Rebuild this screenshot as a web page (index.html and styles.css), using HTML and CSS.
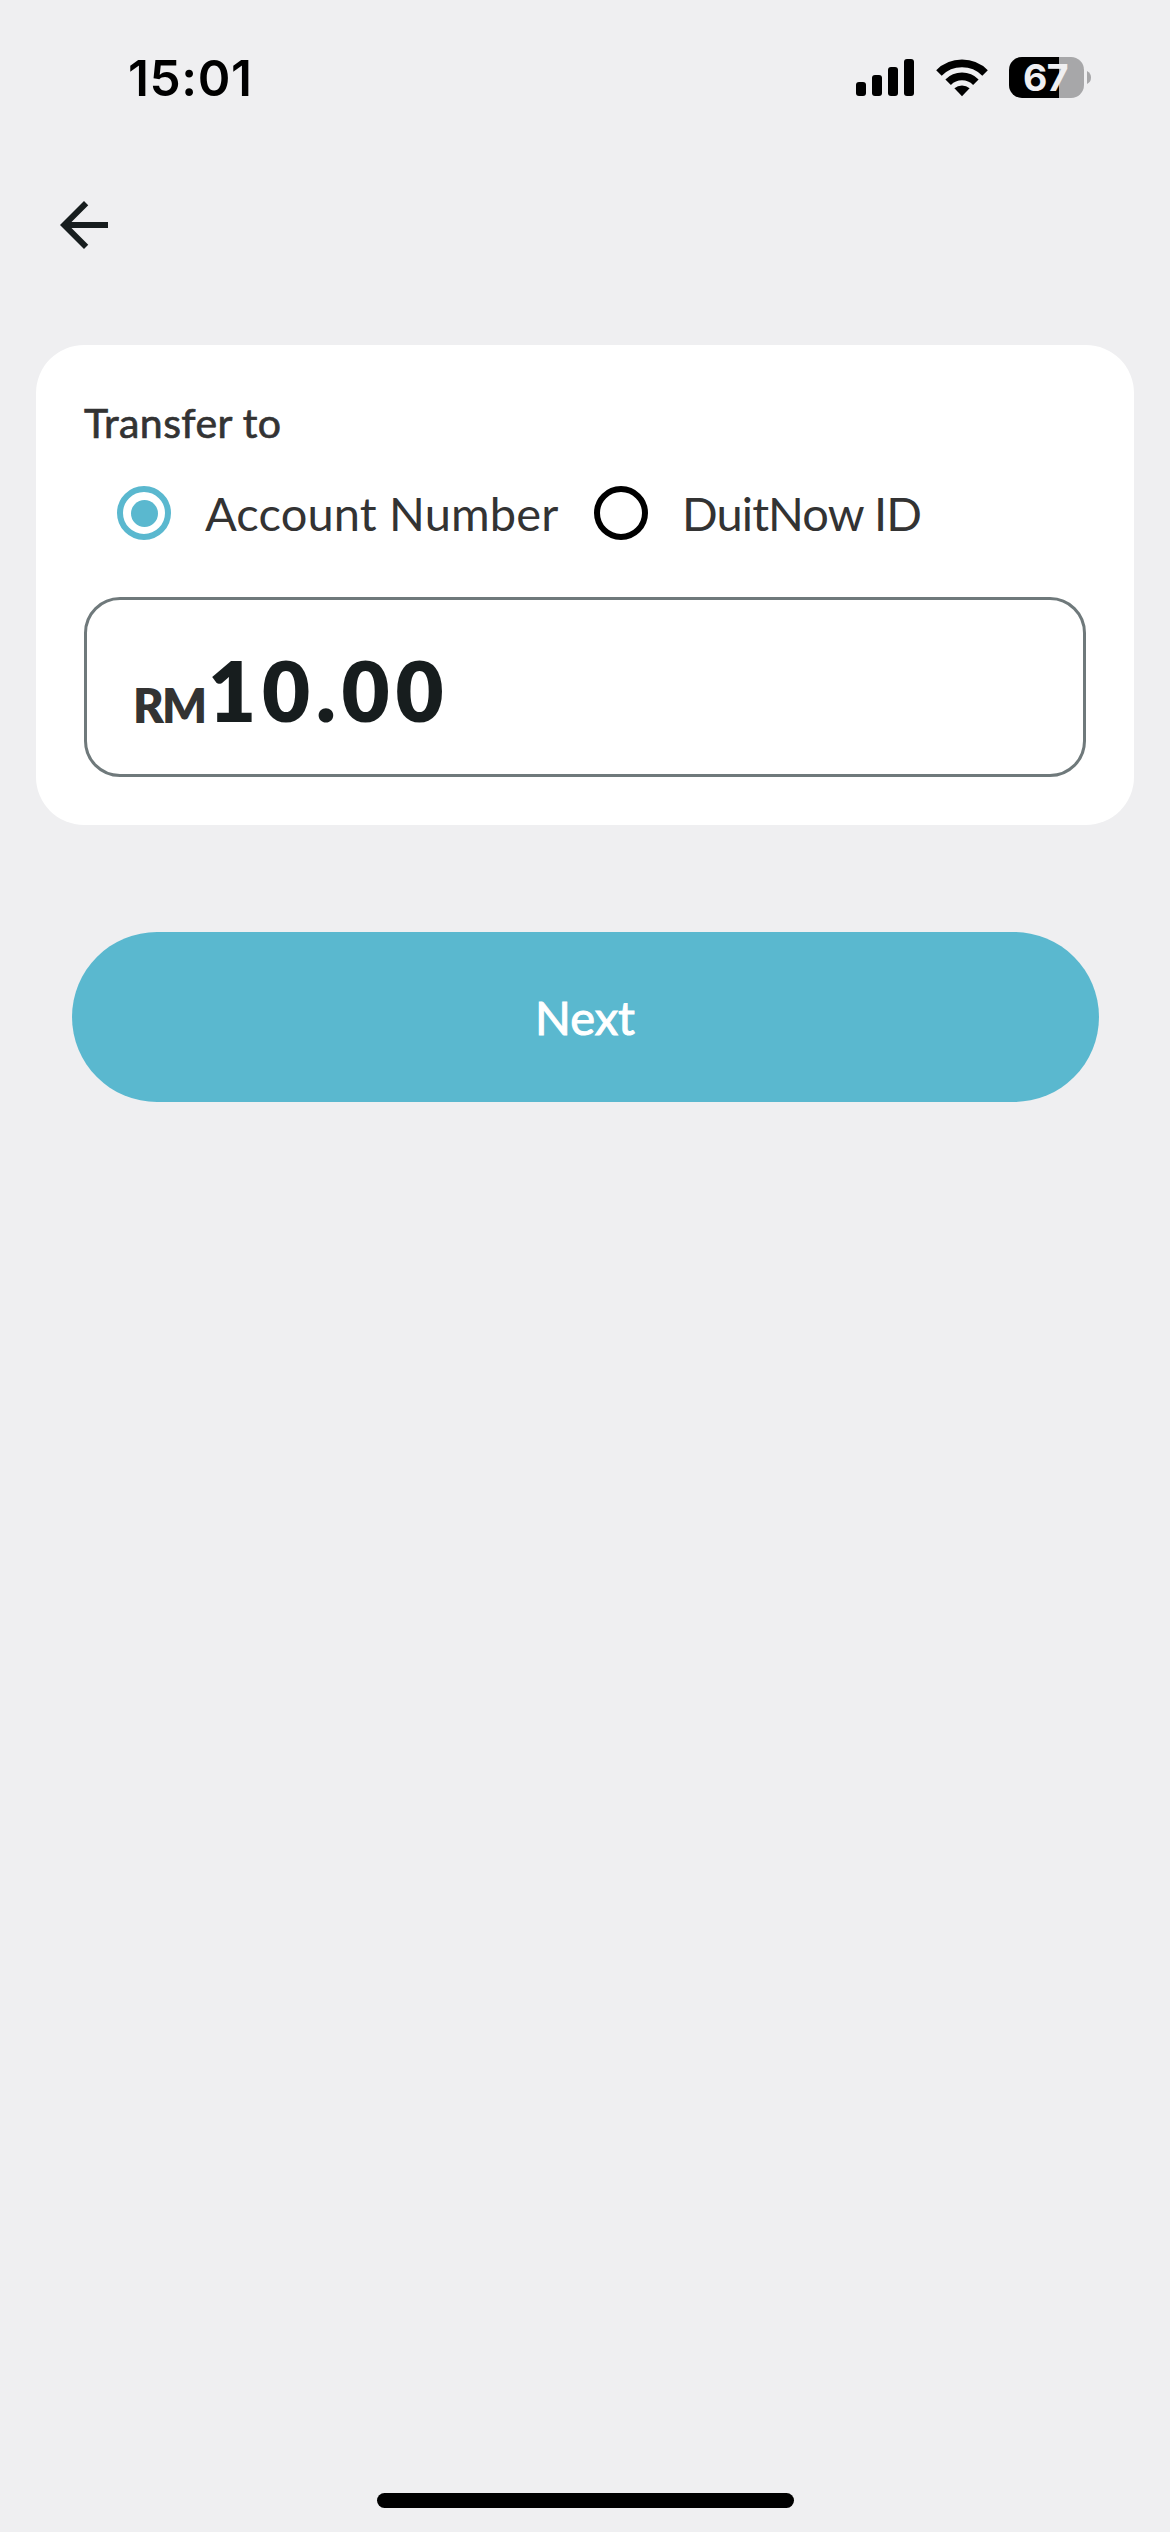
FILE: index.html
```html
<!DOCTYPE html>
<html lang="en">
<head>
<meta charset="utf-8">
<title>Transfer</title>
<link rel="stylesheet" href="styles.css">
</head>
<body>
<div class="screen">
  <header class="status">
    <span class="time">15:01</span>
    <div class="indicators">
      <svg class="signal" width="58" height="37" viewBox="0 0 58 37">
        <rect x="0" y="23" width="10" height="14" rx="3"/>
        <rect x="16" y="16" width="10" height="21" rx="3"/>
        <rect x="32" y="8" width="10" height="29" rx="3"/>
        <rect x="48" y="0" width="10" height="37" rx="3"/>
      </svg>
      <svg class="wifi" width="52" height="38" viewBox="0 0 52 38">
        <path class="arc" d="M2.95 13.95A32.6 32.6 0 0 1 49.05 13.95"/>
        <path class="arc" d="M12.14 23.14A19.6 19.6 0 0 1 39.86 23.14"/>
        <path d="M26 37.2L18.4 29.2A11.8 11.8 0 0 1 33.6 29.2Z"/>
      </svg>
      <div class="battery"><span class="level">67</span></div>
      <svg class="nub" width="4" height="13" viewBox="0 0 4 13"><path d="M0 0Q4 2 4 6.5T0 13Z"/></svg>
    </div>
  </header>
  <nav class="nav">
    <svg width="72" height="72" viewBox="0 0 24 24"><path d="M20 11H7.83l5.59-5.59L12 4l-8 8 8 8 1.41-1.41L7.83 13H20z"/></svg>
  </nav>
  <main class="card">
    <div class="label">Transfer to</div>
    <div class="options">
      <div class="radio selected"></div>
      <span class="option account">Account Number</span>
      <div class="radio"></div>
      <span class="option duitnow">DuitNow ID</span>
    </div>
    <div class="amount">
      <span class="currency">RM</span>
      <span class="value">10.00</span>
    </div>
  </main>
  <button class="next"><span>Next</span></button>
  <div class="home"></div>
</div>
</body>
</html>
```
FILE: styles.css
```css
* { box-sizing: border-box; }
body { margin: 0; background: #efeff1; }
.screen {
  display: flex;
  flex-direction: column;
  width: 1170px;
  height: 2532px;
  font-family: Lato, "Open Sans", sans-serif;
  color: #333;
  white-space: nowrap;
}
svg { display: block; flex: none; }
.status {
  display: flex;
  justify-content: space-between;
  height: 141px;
  padding: 57px 79px 0 128px;
  font-family: Inter, sans-serif;
  color: #000;
}
.time { font-size: 49.5px; line-height: 42px; font-weight: 600; letter-spacing: 0.6px; }
.indicators { display: flex; align-items: flex-start; }
.signal { margin-top: 2px; }
.wifi { margin: 2px 0 0 21.5px; }
.arc { fill: none; stroke: #000; stroke-width: 7.8; }
.battery {
  width: 75px;
  height: 41px;
  margin-left: 21.5px;
  padding-left: 14px;
  border-radius: 13px;
  background: linear-gradient(90deg, #000 50px, #a7a7a9 50px);
}
.level { display: block; font-size: 37.5px; line-height: 41px; font-weight: 700; letter-spacing: -0.5px; color: #efeff1; }
.nub { margin: 14px 0 0 3px; fill: #a7a7a9; }
.nav { height: 204px; padding: 48px; fill: #171d1e; }
.card {
  height: 480px;
  margin: 0 36px;
  padding: 48px;
  border-radius: 48px;
  background: #fff;
}
.label { height: 93px; font-size: 41px; line-height: 60px; letter-spacing: 0.4px; -webkit-text-stroke: 0.7px #333; }
.options { display: flex; align-items: center; height: 54px; padding-left: 33px; }
.radio {
  flex: none;
  display: grid;
  place-items: center;
  width: 54px;
  height: 54px;
  border: 6px solid #000;
  border-radius: 50%;
}
.selected { border-color: #5ab8cf; }
.selected::before { content: ""; width: 27px; height: 27px; border-radius: 50%; background: #5ab8cf; }
.option { margin-left: 34px; font-size: 47px; line-height: 54px; }
.account { width: 389px; letter-spacing: 0.15px; }
.duitnow { letter-spacing: -0.9px; }
.amount {
  display: flex;
  align-items: flex-start;
  height: 180px;
  margin-top: 57px;
  padding-left: 46px;
  border: 3px solid #6f797b;
  border-radius: 36px;
}
.currency { width: 75px; margin-top: 75px; font-size: 47px; line-height: 60px; font-weight: 800; letter-spacing: -2px; }
.value { margin-top: 40px; font-size: 83px; line-height: 100px; font-weight: 800; letter-spacing: 5.8px; color: #171d1e; }
.next {
  height: 170px;
  margin: 107px 71.5px 0;
  padding: 0;
  border: 0;
  border-radius: 85px;
  background: #5ab8cf;
  color: #fff;
  font: 400 47px Lato, sans-serif;
  -webkit-text-stroke: 1px #fff;
}
.home { width: 417px; height: 15px; margin: auto auto 24px 377px; border-radius: 8px; background: #000; }
```
